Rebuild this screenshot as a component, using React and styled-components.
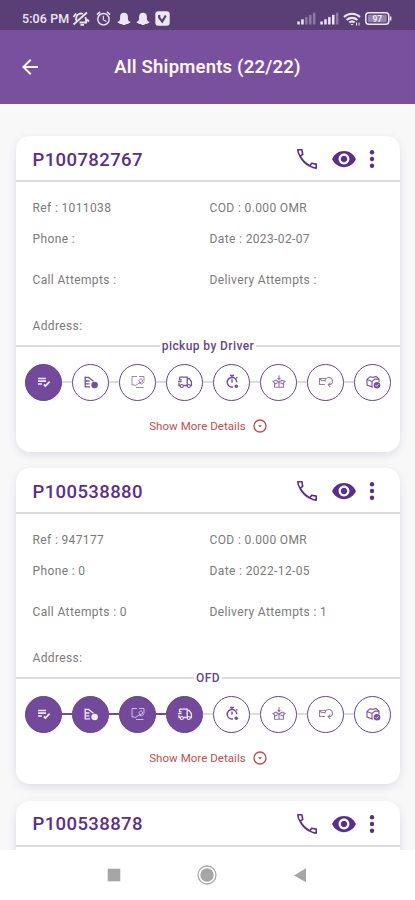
import React from 'react';
import styled, { createGlobalStyle } from 'styled-components';
import { MdAlarm, MdArrowBack, MdVisibility } from 'react-icons/md';

const GlobalStyle = createGlobalStyle`
  * {
    box-sizing: border-box;
  }

  body {
    margin: 0;
    font-family: Roboto, 'Liberation Sans', sans-serif;
  }
`;

const Screen = styled.div`
  width: 415px;
  height: 900px;
  display: flex;
  flex-direction: column;
  overflow: hidden;
  background: #f8f8f9;
`;

const StatusBar = styled.div`
  flex: none;
  height: 30px;
  padding: 7px 23px 0 22px;
  display: flex;
  align-items: center;
  justify-content: space-between;
  background: #5a3f77;
  color: #efe6f5;
`;

const StatusGroup = styled.div`
  display: flex;
  align-items: center;
  gap: ${props => props.$gap}px;
`;

const Clock = styled.span`
  width: 48px;
  margin-right: -3px;
  font-size: 12.5px;
  font-weight: 500;
  letter-spacing: 0.1px;
  white-space: nowrap;
`;

const Header = styled.header`
  flex: none;
  height: 73.5px;
  padding: 0 20px;
  display: grid;
  grid-template-columns: 24px 1fr 24px;
  align-items: center;
  background: #77519d;
  color: #fbf6ff;
`;

const BackButton = styled.button`
  display: flex;
  padding: 0;
  margin-left: -2px;
  border: 0;
  background: none;
  color: inherit;
`;

const Title = styled.h1`
  margin: 1px 0 0;
  font-size: 18.5px;
  font-weight: 600;
  letter-spacing: 0.2px;
  text-align: center;
  white-space: nowrap;
`;

const List = styled.main`
  flex: 1;
  min-height: 0;
  padding: 32.5px 15px 0 16px;
  display: flex;
  flex-direction: column;
  gap: 16.3px;
  overflow: hidden;
`;

const Card = styled.article`
  flex: none;
  height: 316px;
  border-radius: 14px;
  background: #fff;
  box-shadow: 0 3px 8px rgba(60, 50, 90, 0.13);
`;

const CardHeader = styled.div`
  height: 46px;
  padding: 0 20px 0 16.5px;
  display: flex;
  align-items: center;
  justify-content: space-between;
  border-bottom: 2px solid #dcdcde;
`;

const ShipmentId = styled.h2`
  margin: 3px 0 0;
  font-size: 18.5px;
  font-weight: 500;
  letter-spacing: 0.4px;
  color: #5a2f8c;
`;

const Actions = styled.div`
  display: flex;
  align-items: center;
  margin-top: 2px;
  color: #5a2f8c;
`;

const Action = styled.button`
  display: flex;
  justify-content: center;
  width: ${props => props.$width}px;
  padding: 0;
  border: 0;
  background: none;
  color: inherit;

  svg {
    flex: none;
  }
`;

const Fields = styled.div`
  height: 164px;
  padding: 9.5px 16.5px 0;
  display: grid;
  grid-template-columns: 177px 1fr;
  grid-template-rows: 32px 30px 52px 41px;
  align-items: center;
`;

const Field = styled.span`
  font-size: 12px;
  letter-spacing: 0.37px;
  color: #7a7a7a;
  white-space: nowrap;
`;

const StatusDivider = styled.div`
  height: 0;
  display: flex;
  align-items: center;
  gap: 2px;
  font-size: 12px;
  font-weight: 500;
  letter-spacing: 0.4px;
  color: #66458f;

  &::before,
  &::after {
    content: '';
    flex: 1;
    height: 2px;
    background: #dcdcde;
  }
`;

const Steps = styled.div`
  display: flex;
  align-items: center;
  padding: 17.5px 9px 0;
`;

const Step = styled.div`
  flex: none;
  width: 37px;
  height: 37px;
  display: flex;
  align-items: center;
  justify-content: center;
  border: 1.5px solid #66438f;
  border-radius: 50%;
  background: ${props => props.$done ? '#73499c' : '#fff'};
  color: ${props => props.$done ? '#f3e9fb' : '#74529b'};
`;

const Connector = styled.div`
  flex: 1;
  height: 2px;
  background: ${props => props.$done ? '#73499c' : '#dddbe0'};
`;

const MoreDetails = styled.button`
  width: 100%;
  margin-top: 17px;
  padding: 0;
  display: flex;
  align-items: center;
  justify-content: center;
  gap: 7px;
  border: 0;
  background: none;
  font-family: inherit;
  font-size: 11.5px;
  letter-spacing: 0.05px;
  line-height: 16px;
  color: #c24e4e;
`;

const NavBar = styled.nav`
  flex: none;
  height: 50px;
  padding: 0 105px 0 104px;
  display: flex;
  align-items: center;
  justify-content: space-between;
  background: #fff;
`;

const stepIcons = [
  // order list with pen
  <g>
    <path d="M2 4.5h8M2 7.2h8M2 10h4" strokeWidth="1.7" />
    <path d="M7.8 10.5l1.6 1.5L13.6 7.6" strokeWidth="1.8" />
  </g>,
  // scheduled pickup
  <g>
    <path d="M2.2 13.5V2.5M2 3.2l3.5.3 5 3.8M2 7h4.5M2 9.8h4.5M2 12.8h5" strokeWidth="1.3" />
    <circle cx="11.6" cy="11" r="3.3" fill="currentColor" stroke="none" />
  </g>,
  // scan at hub
  <g opacity="0.7">
    <path d="M2 11V2.5h5M9 2.5h5v5M2 11h3M6 13.5h7.5M5 12l4-3 2.5 1 2.5-2M9 6.5l2-2 2 2.5-3 2z" strokeWidth="1" />
  </g>,
  // truck
  <g>
    <path d="M2.5 3.2h7.7v8.3M10.2 4.5h2l2.2 3.3v3.7h-1M10.4 11.5H6.5M3.3 11.5H2V9M2.5 3.2v2.6h2.3M1 7.6h3.5" strokeWidth="1.3" />
    <circle cx="4.8" cy="12" r="1.5" strokeWidth="1.2" />
    <circle cx="11.8" cy="12" r="1.5" strokeWidth="1.2" />
  </g>,
  // stopwatch
  <g>
    <path d="M6 1.4h4M8 1.5v2M8 5.5v3M12.3 4.2l1-1M9 13a4.8 4.8 0 1 1 3.8-4.8" strokeWidth="1.5" />
    <circle cx="12.3" cy="12.2" r="1.8" fill="currentColor" stroke="none" />
  </g>,
  // open box
  <g opacity="0.8">
    <path d="M3.5 9v4.3h9V9M2 7.5l3-1.3 3 1.8 3-1.8 3 1.3-2.5 2.3L8 8l-3.5 1.8zM8 8v5.3M8 1.2V6M6.5 4L8 5.7 9.5 4" strokeWidth="1.1" />
  </g>,
  // returned parcel
  <g opacity="0.75">
    <path d="M7 10.5H1.5V4.5h6M1.5 4.5l2 2h3.5M7 7.5c0-5 6.8-5.5 7.5-.5.2 2.5-1.5 3.8-4 3.8M12.2 8.5l-2 2.3 2 2.2" strokeWidth="1.1" />
  </g>,
  // delivered parcel
  <g>
    <path d="M8 13.3l-6-2.2V5.4l3-2.6 3 .6 3-1 3 2.6v3M2 5.4l5 2L10 5l4 .2M7 7.4v5.6" strokeWidth="1.1" />
    <circle cx="12" cy="11.2" r="3.3" fill="currentColor" stroke="none" />
    <path d="M10.5 11.2l1.1 1.1 1.9-2" stroke="#fff" strokeWidth="0.8" />
  </g>
];

const StepIcon = ({ index }) => (
  <svg width="16" height="16" viewBox="0 0 16 16" fill="none" stroke="currentColor">
    {stepIcons[index]}
  </svg>
);

const PhoneIcon = () => (
  <svg width="22" height="22" viewBox="0 0 22 22" fill="none" stroke="currentColor" strokeWidth="1.6" strokeLinejoin="round">
    <path d="M1.8 1.8h4.1l.8 4.5-2.6 1.9c-1.5-1.9-2.2-4.1-2.3-6.4z" />
    <path d="M20.2 20.2v-4.1l-4.5-.8-2 2.6c2 1.4 4.2 2.2 6.5 2.3z" />
    <path d="M4.1 8.2c2.3 4.3 5.3 7.4 9.6 9.7" strokeWidth="1.9" />
  </svg>
);

const DotsIcon = () => (
  <svg width="6" height="20" viewBox="0 0 6 20" fill="currentColor">
    <circle cx="3" cy="3.2" r="2.2" />
    <circle cx="3" cy="10" r="2.2" />
    <circle cx="3" cy="16.8" r="2.2" />
  </svg>
);

const MutedBell = () => (
  <svg width="18" height="16" viewBox="0 0 18 16" fill="none" stroke="currentColor" strokeWidth="1.8">
    <path d="M1.5 13.5L15 1.5M3.8 9.5l.6-3.3A4.6 4.6 0 0 1 11 3M13.6 6l.6 5.5H7.5M8.5 13.8h3.5M1.5 6L4 2.5M15 8.5l2 2" />
  </svg>
);

const Ghost = () => (
  <svg width="14" height="14" viewBox="0 0 14 14" fill="currentColor">
    <path d="M7 .8c2.4 0 3.9 1.6 3.9 4v2.7c.4 1.2 1.3 2 2.5 2.4.2.7-.8 1-1.6 1.3-.5 1-1.6.6-2.4.9-.7.5-1.3 1-2.4 1s-1.700-.5-2.400-1c-.8-.3-1.900.1-2.400-.9C1.400 10.900.4 10.600.6 9.900c1.200-.4 2.100-1.200 2.500-2.400V4.800c0-2.400 1.500-4 3.900-4z" />
  </svg>
);

const BadgeV = () => (
  <svg width="15" height="15" viewBox="0 0 15 15">
    <rect x="0.3" y="0.3" width="14.4" height="14.4" rx="3" fill="currentColor" />
    <path d="M4.2 4v2.7L7.2 10.500l3.600-6" fill="none" stroke="#5a3f77" strokeWidth="2.2" />
  </svg>
);

const Signal = ({ level }) => (
  <svg width="19" height="13" viewBox="0 0 19 13" fill="currentColor">
    {[0, 1, 2, 3, 4].map(bar => (
      <rect
        key={bar}
        x={bar * 3.9 + 0.3}
        y={9.5 - bar * 2.2}
        width="2.5"
        height={3 + bar * 2.2}
        opacity={bar < level ? 1 : 0.35}
      />
    ))}
  </svg>
);

const Wifi = () => (
  <svg width="18" height="14" viewBox="0 0 18 14" fill="none" stroke="currentColor" strokeWidth="2.1">
    <path d="M1 5a11.5 11.5 0 0 1 16 0M3.7 8a7.6 7.6 0 0 1 10.6 0M6.4 10.6a3.8 3.8 0 0 1 5.2 0" />
    <path d="M7.5 12L9 13.5l1.5-1.5z" fill="currentColor" stroke="none" />
    <path d="M13.5 10.500v3M16 10.500v3" strokeWidth="1" />
  </svg>
);

const Battery = () => (
  <svg width="27" height="13" viewBox="0 0 27 13">
    <rect x="0.8" y="0.8" width="23" height="11.4" rx="3" fill="none" stroke="currentColor" strokeWidth="1.5" />
    <rect x="2.9" y="2.8" width="18.8" height="7.4" rx="1.2" fill="currentColor" opacity="0.4" />
    <path d="M24.8 4.5h1.6v4h-1.6z" fill="currentColor" />
    <text x="12.3" y="9.6" fontSize="8.5" fontWeight="700" textAnchor="middle" fill="currentColor">97</text>
  </svg>
);

const shipments = [
  {
    id: 'P100782767',
    fields: ['Ref : 1011038', 'COD : 0.000 OMR', 'Phone :', 'Date : 2023-02-07', 'Call Attempts :', 'Delivery Attempts :', 'Address:'],
    status: 'pickup by Driver',
    done: 1
  },
  {
    id: 'P100538880',
    fields: ['Ref : 947177', 'COD : 0.000 OMR', 'Phone : 0', 'Date : 2022-12-05', 'Call Attempts : 0', 'Delivery Attempts : 1', 'Address:'],
    status: 'OFD',
    done: 4
  },
  {
    id: 'P100538878',
    fields: [],
    done: 0
  }
];

const ShipmentCard = ({ shipment }) => (
  <Card>
    <CardHeader>
      <ShipmentId>{shipment.id}</ShipmentId>
      <Actions>
        <Action $width={36} aria-label="Call"><PhoneIcon /></Action>
        <Action $width={38} aria-label="View"><MdVisibility size={26} /></Action>
        <Action $width={17} aria-label="More"><DotsIcon /></Action>
      </Actions>
    </CardHeader>
    {shipment.status && (
      <>
        <Fields>
          {shipment.fields.map((field, index) => (
            <Field key={index}>{field}</Field>
          ))}
        </Fields>
        <StatusDivider>{shipment.status}</StatusDivider>
        <Steps>
          {stepIcons.map((icon, index) => (
            <React.Fragment key={index}>
              {index > 0 && <Connector $done={index < shipment.done} />}
              <Step $done={index < shipment.done}>
                <StepIcon index={index} />
              </Step>
            </React.Fragment>
          ))}
        </Steps>
        <MoreDetails>
          Show More Details
          <svg width="14" height="14" viewBox="0 0 14 14" fill="none" stroke="currentColor">
            <circle cx="7" cy="7" r="6" strokeWidth="1.4" />
            <path d="M5 6.200h4L7 8.500z" fill="currentColor" stroke="none" />
          </svg>
        </MoreDetails>
      </>
    )}
  </Card>
);

const App = () => (
  <>
    <GlobalStyle />
    <Screen>
      <StatusBar>
        <StatusGroup $gap={5}>
          <Clock>5:06 PM</Clock>
          <MutedBell />
          <MdAlarm size={17} />
          <Ghost />
          <Ghost />
          <BadgeV />
        </StatusGroup>
        <StatusGroup $gap={4}>
          <Signal level={2} />
          <Signal level={4} />
          <Wifi />
          <Battery />
        </StatusGroup>
      </StatusBar>
      <Header>
        <BackButton aria-label="Back"><MdArrowBack size={24} /></BackButton>
        <Title>All Shipments (22/22)</Title>
      </Header>
      <List>
        {shipments.map(shipment => (
          <ShipmentCard key={shipment.id} shipment={shipment} />
        ))}
      </List>
      <NavBar>
        <svg width="20" height="20" viewBox="0 0 20 20">
          <rect x="3.7" y="3.7" width="12.6" height="12.6" fill="#a6a6a6" />
        </svg>
        <svg width="22" height="22" viewBox="0 0 22 22">
          <circle cx="11" cy="11" r="9" fill="none" stroke="#a6a6a6" strokeWidth="1.3" />
          <circle cx="11" cy="11" r="6.7" fill="#a6a6a6" />
        </svg>
        <svg width="20" height="20" viewBox="0 0 20 20">
          <path d="M16 3.2v14L4 10.5z" fill="#a6a6a6" />
        </svg>
      </NavBar>
    </Screen>
  </>
);

export default App;
